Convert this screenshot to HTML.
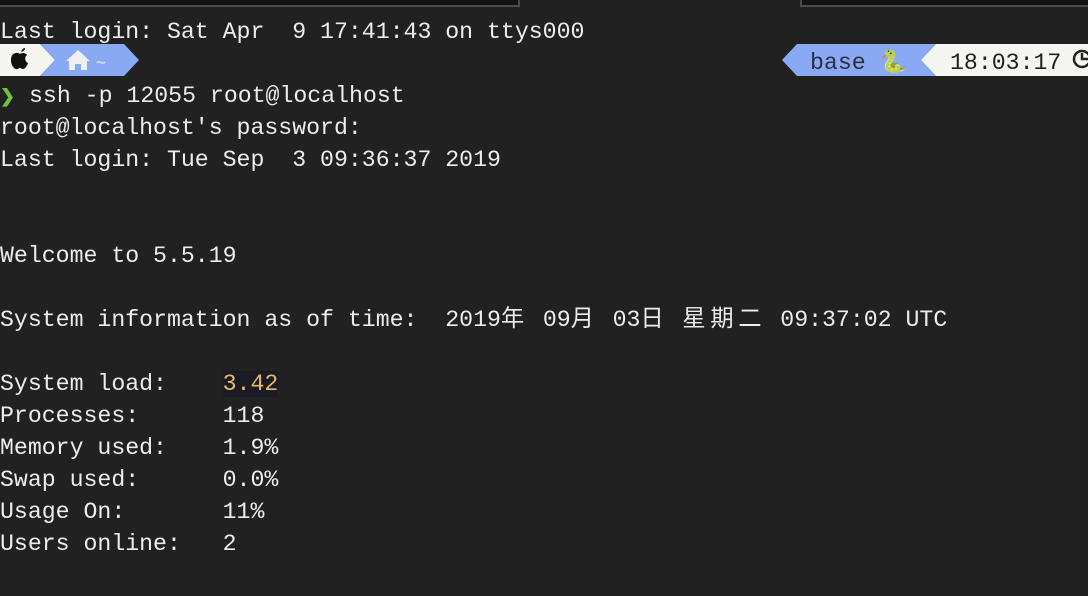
<!DOCTYPE html>
<html><head><meta charset="utf-8"><style>
html,body{margin:0;padding:0;background:#212121;width:1088px;height:596px;overflow:hidden;position:relative}
.t{position:absolute;left:0;font-family:"Liberation Mono","Noto Sans CJK SC",monospace;font-size:23.2px;color:#ededed;white-space:pre;line-height:32px;height:32px}
.c{display:inline-block;width:28px;text-align:left}
.box{position:absolute;top:-2px;height:7px;background:#121212;border:2px solid #4a4a4a}
</style></head><body>
<div class="box" style="left:-4px;width:520px;border-top:none"></div>
<div class="box" style="left:800px;width:300px;border-top:none"></div>

<div class="t" style="top:16px">Last login: Sat Apr  9 17:41:43 on ttys000</div>

<svg style="position:absolute;left:0;top:44px" width="1088" height="32">
<polygon points="0,0 40,0 55,16 40,32 0,32" fill="#f5f6f0"/>
<polygon points="40,0 124,0 139,16 124,32 40,32 55,16" fill="#89a9f5"/>
<path d="M21,8 c1,-3 3,-4 4,-4 c0,2 -1,3 -4,4z M20,10 c-2,-2 -9,-2 -9,6 c0,6 4,10 6,9 c1,0 2,-1 3,-1 c1,0 2,1 3,1 c2,0 4,-3 5,-6 c-3,-1 -4,-6 -1,-8 c-2,-3 -6,-2 -7,-1z" fill="#111"/>
<path d="M66,17 L78,6 L90,17 L87,17 L87,26 L81,26 L81,20 L75,20 L75,26 L69,26 L69,17Z" fill="#eef0f4"/>
<text x="96" y="24" font-family="Liberation Sans" font-size="17" fill="#f0f0f0">~</text>
<polygon points="797,0 936,0 921,16 936,32 797,32 782,16" fill="#89a9f5"/>
<polygon points="936,0 1088,0 1088,32 936,32 921,16" fill="#f5f6f0"/>
<circle cx="1082" cy="15" r="8" fill="none" stroke="#222" stroke-width="2.5"/>
<path d="M1082,9 V15 H1088" stroke="#222" stroke-width="2.5" fill="none"/>
</svg>
<div class="t" style="top:47px;left:810px;color:#2b2f40">base <span style="font-size:22px">🐍</span></div>
<div class="t" style="top:47px;left:950px;color:#222">18:03:17</div>

<div class="t" style="top:80px"><span style="color:#6fc33a;font-weight:bold;font-size:18px">❯</span> ssh -p 12055 root@localhost</div>
<div class="t" style="top:112px">root@localhost's password:</div>
<div class="t" style="top:144px">Last login: Tue Sep  3 09:36:37 2019</div>
<div class="t" style="top:240px">Welcome to 5.5.19</div>
<div class="t" style="top:304px">System information as of time:  2019<span class="c">年</span> 09<span class="c">月</span> 03<span class="c">日</span> <span class="c">星</span><span class="c">期</span><span class="c">二</span> 09:37:02 UTC</div>
<div class="t" style="top:368px">System load:    <span style="background:#1b1b26;color:#e8b968">3.42</span></div>
<div class="t" style="top:400px">Processes:      118</div>
<div class="t" style="top:432px">Memory used:    1.9%</div>
<div class="t" style="top:464px">Swap used:      0.0%</div>
<div class="t" style="top:496px">Usage On:       11%</div>
<div class="t" style="top:528px">Users online:   2</div>
</body></html>
